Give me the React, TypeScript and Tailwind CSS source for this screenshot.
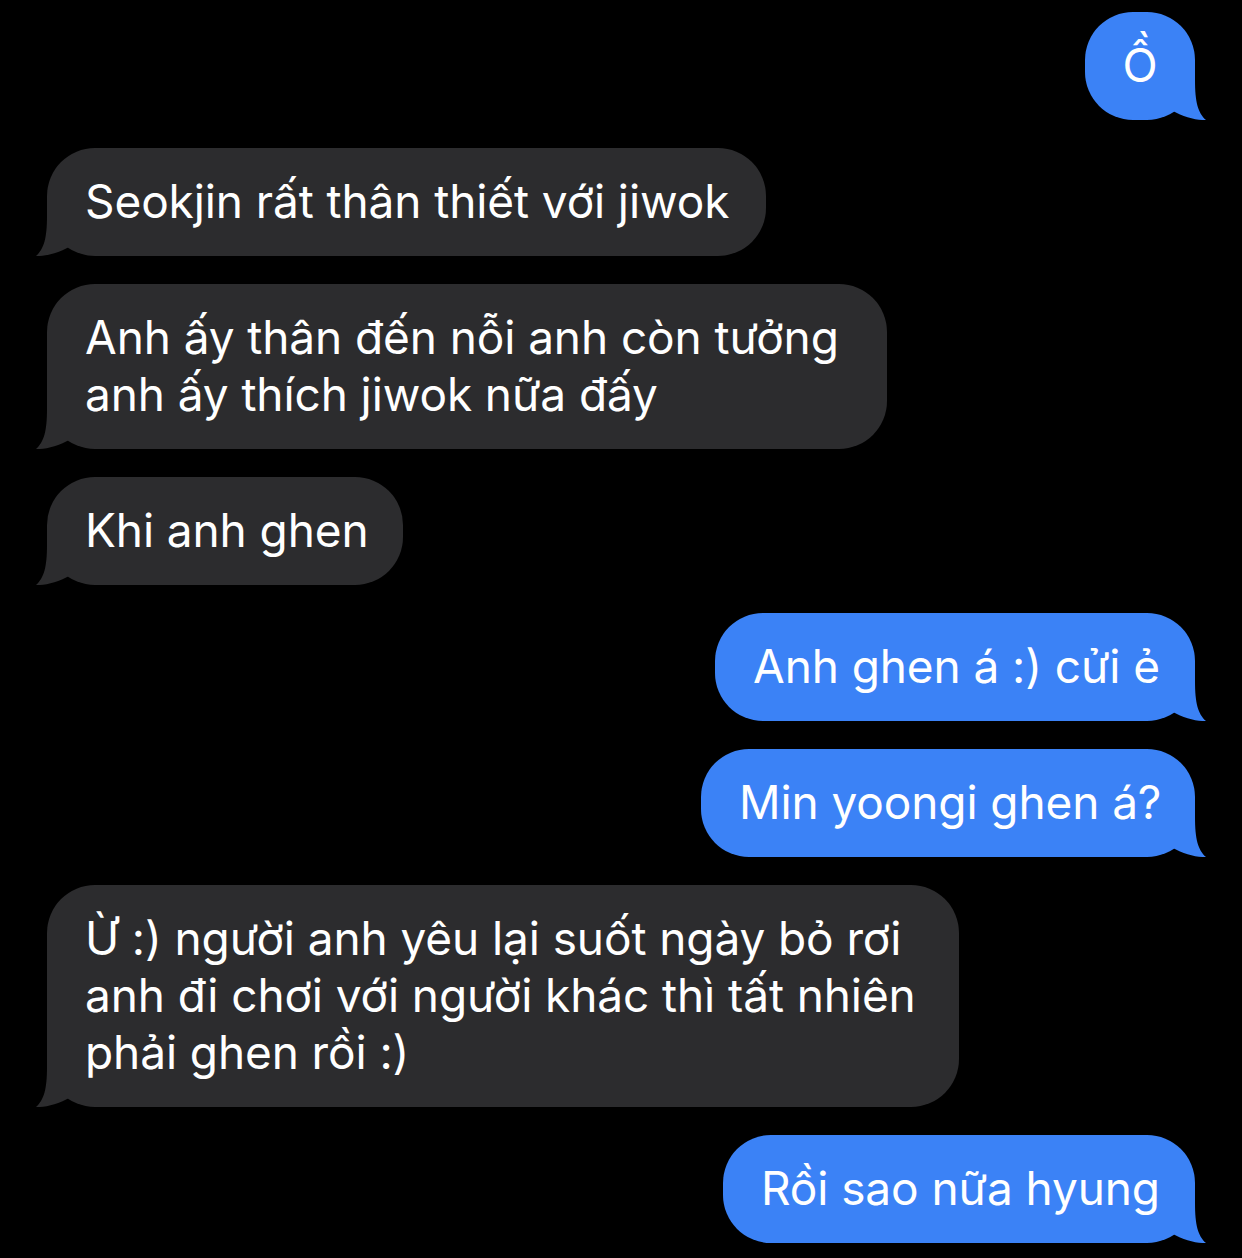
import React from "react";

type Side = "left" | "right";

function Tail({ side, color }: { side: Side; color: string }) {
  if (side === "left") {
    return (
      <svg
        className="absolute bottom-0 left-[-11px]"
        width="33"
        height="50"
        viewBox="-11 -50 33 50"
      >
        <path d="M0 -50 L0 -40 C0 -18 -3 -7 -11 0 C-2 0.5 12 -3 22 -9 L22 -50 Z" fill={color} />
      </svg>
    );
  }
  return (
    <svg
      className="absolute bottom-0 right-[-11px]"
      width="33"
      height="50"
      viewBox="-22 -50 33 50"
    >
      <path d="M0 -50 L0 -40 C0 -18 3 -7 11 0 C2 0.5 -12 -3 -22 -9 L-22 -50 Z" fill={color} />
    </svg>
  );
}

function Bubble({
  side,
  width,
  lines,
  center,
}: {
  side: Side;
  width: string;
  lines: string[];
  center?: boolean;
}) {
  const color = side === "left" ? "#2c2c2e" : "#3b82f6";
  return (
    <div className={side === "left" ? "flex justify-start pl-[47px]" : "flex justify-end pr-[47px]"}>
      <div
        className={
          (side === "left" ? "bg-[#2c2c2e] " : "bg-[#3b82f6] ") +
          width +
          " relative rounded-[48px] pt-[25px] pb-[26px] " +
          (center ? "px-0 text-center" : "px-[38px]")
        }
      >
        <Tail side={side} color={color} />
        <div className="relative whitespace-nowrap text-white text-[46px] leading-[57px] tracking-[-0.1px] font-['Inter','Liberation_Sans',sans-serif]">
          {lines.map((l, i) => (
            <div key={i}>{l}</div>
          ))}
        </div>
      </div>
    </div>
  );
}

export default function App() {
  return (
    <div className="w-[1242px] h-[1258px] bg-black overflow-hidden flex flex-col gap-[28px] pt-[12px]">
      <Bubble side="right" width="w-[110px]" lines={["Ồ"]} center />
      <Bubble side="left" width="w-[719px]" lines={["Seokjin rất thân thiết với jiwok"]} />
      <Bubble
        side="left"
        width="w-[840px]"
        lines={["Anh ấy thân đến nỗi anh còn tưởng", "anh ấy thích jiwok nữa đấy"]}
      />
      <Bubble side="left" width="w-[356px]" lines={["Khi anh ghen"]} />
      <Bubble side="right" width="w-[480px]" lines={["Anh ghen á :) cửi ẻ"]} />
      <Bubble side="right" width="w-[494px]" lines={["Min yoongi ghen á?"]} />
      <Bubble
        side="left"
        width="w-[912px]"
        lines={[
          "Ừ :) người anh yêu lại suốt ngày bỏ rơi",
          "anh đi chơi với người khác thì tất nhiên",
          "phải ghen rồi :)",
        ]}
      />
      <Bubble side="right" width="w-[472px]" lines={["Rồi sao nữa hyung"]} />
    </div>
  );
}
